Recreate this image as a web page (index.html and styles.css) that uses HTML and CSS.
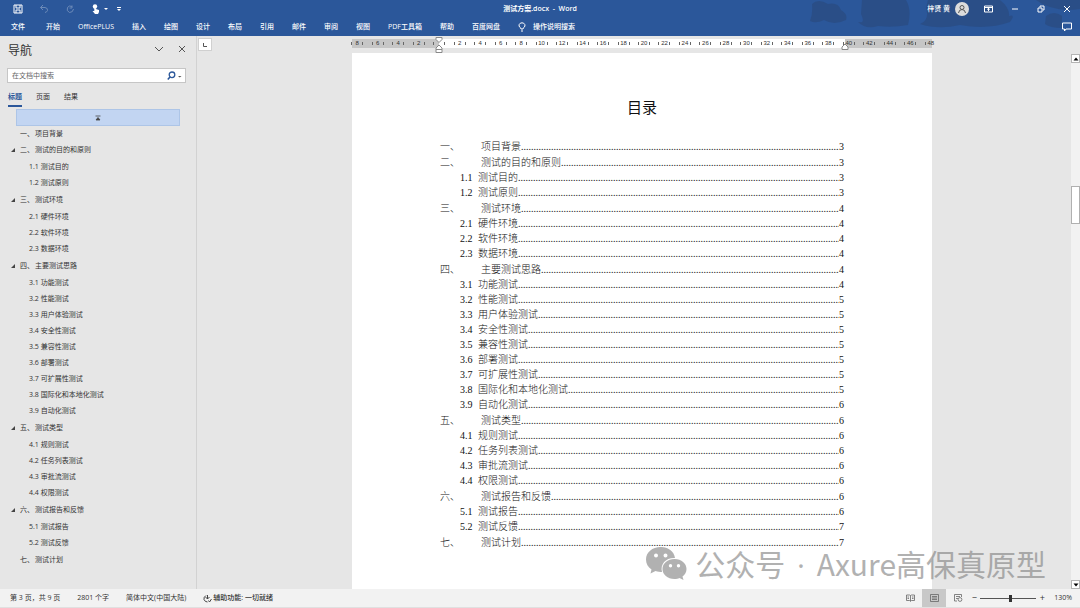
FILE: index.html
```html
<!DOCTYPE html>
<html lang="zh-CN">
<head>
<meta charset="utf-8">
<title>测试方案.docx - Word</title>
<link rel="stylesheet" href="styles.css">
</head>
<body>
<div class="app">
  <header class="header">
    <svg class="header-art" viewBox="0 0 270 36" aria-hidden="true">
      <path d="M2 4Q8-2 18 4Q28 2 31 10Q38 14 36 20Q24 26 14 20Q6 24 0 21Q3 14 2 4Z"/>
      <path d="M52 0H96Q102 10 98 25Q82 28 68 26Q56 30 48 22Q56 24 51 14Z"/>
      <path d="M118 0H190Q200 8 199 16Q206 14 200 22Q178 30 150 25Q128 30 110 24Q120 20 116 8Z"/>
      <path d="M236 16Q244 10 252 16V28Q240 28 235 24Z"/>
      <path d="M226 0H270V9Q244 13 226 0Z"/>
    </svg>
    <div class="titlebar">
      <div class="quick">
        <button class="icon-btn" aria-label="保存"><svg width="10" height="10" viewBox="0 0 10 10"><path class="ln" d="M1 1H9V9H1ZM3 1V4H7V1M3 9V6H7V9"/></svg></button>
        <button class="icon-btn faded" aria-label="撤消"><svg width="10" height="10" viewBox="0 0 10 10"><path class="ln" d="M4 1L1.500 3.500L4 6M1.500 3.500H6Q9 4 8.500 6.500Q8 8 6 8.500"/></svg></button>
        <button class="icon-btn faded" aria-label="恢复"><svg width="10" height="10" viewBox="0 0 10 10"><path class="ln" d="M7 1.500V4H4.500M7 2.500Q4 1 2.500 3.500Q1 7 4.500 8.500Q8 8.500 8.500 5"/></svg></button>
        <span class="touch">
          <button class="icon-btn" aria-label="触摸模式"><svg width="10" height="10" viewBox="0 0 10 10"><circle class="fl" cx="4" cy="2.500" r="2.200"/><path class="fl" d="M3.300 2H4.800V5L8 6V8L7 10H4L1.500 7H3.300Z"/></svg></button>
          <svg width="4" height="4" viewBox="0 0 4 4"><path class="fl" d="M0 1H4L2 3Z"/></svg>
        </span>
        <button class="icon-btn more" aria-label="自定义"><svg width="4" height="6" viewBox="0 0 4 6"><path class="fl" d="M0 1H4V2H0ZM0 3H4L2 5Z"/></svg></button>
      </div>
      <h1 class="doc-title">测试方案.docx&nbsp; -&nbsp; Word</h1>
      <div class="window">
        <span class="user">梓贤 黄</span>
        <svg class="avatar" width="14" height="14" viewBox="0 0 14 14"><circle cx="7" cy="7" r="7" fill="#dcdcdc"/><circle cx="7" cy="5.500" r="2" fill="none" stroke="#555"/><path d="M3.500 11Q4 7.500 7 7.500Q10 7.500 10.500 11" fill="none" stroke="#555"/></svg>
        <button class="icon-btn" aria-label="功能区显示选项"><svg width="9" height="8" viewBox="0 0 9 8"><path class="ln" d="M.5 1H8.500V7H.5ZM.5 2.500H8.500M4.500 6V3M3.200 4.500L4.500 3.300L5.800 4.500"/></svg></button>
        <button class="icon-btn" aria-label="最小化"><svg width="8" height="8" viewBox="0 0 8 8"><path class="ln" d="M1 4H7"/></svg></button>
        <button class="icon-btn" aria-label="还原"><svg width="8" height="8" viewBox="0 0 8 8"><path class="ln" d="M1 3H5V7H1ZM3 2.500V1H7V5H5.500"/></svg></button>
        <button class="icon-btn" aria-label="关闭"><svg width="8" height="8" viewBox="0 0 8 8"><path class="ln" d="M1 1L7 7M7 1L1 7"/></svg></button>
      </div>
    </div>
    <nav class="menu">
      <button class="file">文件</button><button>开始</button><button>OfficePLUS</button><button>插入</button><button>绘图</button><button>设计</button><button>布局</button><button>引用</button><button>邮件</button><button>审阅</button><button>视图</button><button>PDF工具箱</button><button>帮助</button><button>百度网盘</button>
      <button class="tell"><svg width="8" height="10" viewBox="0 0 8 10"><path class="ln" d="M3 7Q3 6 2 5.500Q.5 4 1.200 2.500Q2 .8 4 .8Q6 .8 6.800 2.500Q7.500 4 6 5.500Q5 6 5 7ZM3 9H5"/></svg>操作说明搜索</button>
      <button class="comment" aria-label="批注"><svg width="10" height="10" viewBox="0 0 10 10"><path class="ln" d="M.5 1H9.500V7H4L2.500 9V7H.5Z"/></svg></button>
    </nav>
  </header>

  <div class="body">
    <aside class="side">
      <div class="side-head">
        <h2>导航</h2>
        <button class="icon-btn" aria-label="选项"><svg width="10" height="8" viewBox="0 0 10 8"><path class="ln" d="M1 2L5 6L9 2"/></svg></button>
        <button class="icon-btn" aria-label="关闭导航"><svg width="8" height="8" viewBox="0 0 8 8"><path class="ln" d="M1 1L7 7M7 1L1 7"/></svg></button>
      </div>
      <label class="search">
        <input type="text" placeholder="在文档中搜索" aria-label="在文档中搜索">
        <svg width="15" height="10" viewBox="0 0 15 10"><circle cx="5" cy="3.800" r="2.800" fill="none" stroke="#2b579a" stroke-width="1.300"/><path d="M3 6L.8 8.500" stroke="#2b579a" stroke-width="1.600"/><path d="M11 5H14.500L12.700 6.500Z" fill="#555"/></svg>
      </label>
      <div class="tabs">
        <button class="on">标题</button><button>页面</button><button>结果</button>
      </div>
      <button class="top-row" aria-label="跳转到开头"><svg width="6" height="6" viewBox="0 0 6 6"><path d="M.5 1H5.500M1 5H5L3 2.500Z" fill="#444" stroke="#444" stroke-width=".8"/></svg></button>
      <ul class="outline">
        <li><a href="#c1"><b>一、</b>项目背景</a></li>
        <li class="open"><a href="#c2"><b>二、</b>测试的目的和原则</a>
          <ul><li><a href="#s11">1.1 测试目的</a></li><li><a href="#s12">1.2 测试原则</a></li></ul></li>
        <li class="open"><a href="#c3"><b>三、</b>测试环境</a>
          <ul><li><a href="#s21">2.1 硬件环境</a></li><li><a href="#s22">2.2 软件环境</a></li><li><a href="#s23">2.3 数据环境</a></li></ul></li>
        <li class="open"><a href="#c4"><b>四、</b>主要测试思路</a>
          <ul><li><a href="#s31">3.1 功能测试</a></li><li><a href="#s32">3.2 性能测试</a></li><li><a href="#s33">3.3 用户体验测试</a></li><li><a href="#s34">3.4 安全性测试</a></li><li><a href="#s35">3.5 兼容性测试</a></li><li><a href="#s36">3.6 部署测试</a></li><li><a href="#s37">3.7 可扩展性测试</a></li><li><a href="#s38">3.8 国际化和本地化测试</a></li><li><a href="#s39">3.9 自动化测试</a></li></ul></li>
        <li class="open"><a href="#c5"><b>五、</b>测试类型</a>
          <ul><li><a href="#s41">4.1 规则测试</a></li><li><a href="#s42">4.2 任务列表测试</a></li><li><a href="#s43">4.3 审批流测试</a></li><li><a href="#s44">4.4 权限测试</a></li></ul></li>
        <li class="open"><a href="#c6"><b>六、</b>测试报告和反馈</a>
          <ul><li><a href="#s51">5.1 测试报告</a></li><li><a href="#s52">5.2 测试反馈</a></li></ul></li>
        <li><a href="#c7"><b>七、</b>测试计划</a></li>
      </ul>
    </aside>

    <main class="work">
      <button class="tab-stop" aria-label="制表符"><svg width="4" height="4" viewBox="0 0 4 4"><path d="M.5 0V3.500H4" fill="none" stroke="#555"/></svg></button>
      <div class="canvas">
        <div class="ruler-wrap">
          <div class="ruler"><div class="marks"><i>8</i><i>6</i><i>4</i><i>2</i><i></i><i>2</i><i>4</i><i>6</i><i>8</i><i>10</i><i>12</i><i>14</i><i>16</i><i>18</i><i>20</i><i>22</i><i>24</i><i>26</i><i>28</i><i>30</i><i>32</i><i>34</i><i>36</i><i>38</i><i>40</i><i>42</i><i>44</i><i>46</i><i class="end">48</i></div></div>
          <svg class="indent left" width="8" height="16" viewBox="0 0 8 16"><path d="M1 .5H7V2.500L4 5.500L1 2.500ZM4 8L7 11V12.500H1V11ZM1 12.500H7V15.500H1Z"/></svg>
          <svg class="indent right" width="8" height="16" viewBox="0 0 8 16"><path d="M4 7L7 10V12.500H1V10Z"/></svg>
        </div>
        <article class="page">
          <h2>目录</h2>
          <div class="toc">
            <section><a class="ch" href="#c1"><b>一、</b>项目背景<s></s>3</a></section>
            <section><a class="ch" href="#c2"><b>二、</b>测试的目的和原则<s></s>3</a>
              <a href="#s11"><b>1.1</b>测试目的<s></s>3</a><a href="#s12"><b>1.2</b>测试原则<s></s>3</a></section>
            <section><a class="ch" href="#c3"><b>三、</b>测试环境<s></s>4</a>
              <a href="#s21"><b>2.1</b>硬件环境<s></s>4</a><a href="#s22"><b>2.2</b>软件环境<s></s>4</a><a href="#s23"><b>2.3</b>数据环境<s></s>4</a></section>
            <section><a class="ch" href="#c4"><b>四、</b>主要测试思路<s></s>4</a>
              <a href="#s31"><b>3.1</b>功能测试<s></s>4</a><a href="#s32"><b>3.2</b>性能测试<s></s>5</a><a href="#s33"><b>3.3</b>用户体验测试<s></s>5</a><a href="#s34"><b>3.4</b>安全性测试<s></s>5</a><a href="#s35"><b>3.5</b>兼容性测试<s></s>5</a><a href="#s36"><b>3.6</b>部署测试<s></s>5</a><a href="#s37"><b>3.7</b>可扩展性测试<s></s>5</a><a href="#s38"><b>3.8</b>国际化和本地化测试<s></s>5</a><a href="#s39"><b>3.9</b>自动化测试<s></s>6</a></section>
            <section><a class="ch" href="#c5"><b>五、</b>测试类型<s></s>6</a>
              <a href="#s41"><b>4.1</b>规则测试<s></s>6</a><a href="#s42"><b>4.2</b>任务列表测试<s></s>6</a><a href="#s43"><b>4.3</b>审批流测试<s></s>6</a><a href="#s44"><b>4.4</b>权限测试<s></s>6</a></section>
            <section><a class="ch" href="#c6"><b>六、</b>测试报告和反馈<s></s>6</a>
              <a href="#s51"><b>5.1</b>测试报告<s></s>6</a><a href="#s52"><b>5.2</b>测试反馈<s></s>7</a></section>
            <section><a class="ch" href="#c7"><b>七、</b>测试计划<s></s>7</a></section>
          </div>
        </article>
      </div>
      <div class="scroll">
        <button aria-label="向上滚动"><svg width="6" height="4" viewBox="0 0 6 4"><path d="M.5 3.500H5.500L3 .5Z"/></svg></button>
        <div class="track"><div class="thumb"></div></div>
        <button aria-label="向下滚动"><svg width="6" height="4" viewBox="0 0 6 4"><path d="M.5 .5H5.500L3 3.500Z"/></svg></button>
      </div>
      <div class="watermark">
        <svg width="41" height="34" viewBox="0 0 41 34"><path fill-rule="evenodd" d="M15 0C6 0 0 5.500 0 12.500C0 17 2 20 5.500 22.500L4.500 26.500L9.500 24C12 24.800 14 25 16 25C14 17 20 10.500 29 11C28 4 22 0 15 0ZM10 6.500a2 2 0 1 1 0 4a2 2 0 1 1 0-4ZM19.500 6.500a2 2 0 1 1 0 4a2 2 0 1 1 0-4Z"/><path fill-rule="evenodd" d="M28.500 12C21.500 12 16.500 16.500 16.500 22C16.500 27.500 21.500 32 28.500 32C30.500 32 32 31.600 33.500 31L37.500 33L36.500 29.500C39 27.500 40.500 25 40.500 22C40.500 16.500 35.500 12 28.500 12ZM24.500 17a1.700 1.700 0 1 1 0 3.400a1.700 1.700 0 1 1 0-3.400ZM32.500 17a1.700 1.700 0 1 1 0 3.400a1.700 1.700 0 1 1 0-3.400Z"/></svg>
        <span>公众号<span class="dot"> · </span>Axure高保真原型</span>
      </div>
    </main>
  </div>

  <footer class="status">
    <span>第 3 页，共 9 页</span><span>2801 个字</span><span>简体中文(中国大陆)</span>
    <span class="access"><svg width="9" height="9" viewBox="0 0 9 9"><path d="M3 1.500Q.5 3 1 5.500Q2 8 4.500 8M4.500 1V5M2.500 3L4.500 5L6.500 3M5.500 6.500L6.500 8L8.500 5" fill="none" stroke="#444"/></svg>辅助功能: 一切就绪</span>
    <div class="views">
      <button aria-label="阅读视图"><svg width="9" height="8" viewBox="0 0 9 8"><path d="M4.500 1.500V7.500M.5 1H3.500L4.500 1.500L5.500 1H8.500V6.500H5.500L4.500 7L3.500 6.500H.5ZM1.500 3H3M1.500 4.500H3M6 3H7.500M6 4.500H7.500"/></svg></button>
      <button class="on" aria-label="页面视图"><svg width="9" height="8" viewBox="0 0 9 8"><path d="M.5 .5H8.500V7.500H.5ZM2 2.500H7M2 4H7M2 5.500H7"/></svg></button>
      <button aria-label="Web 版式视图"><svg width="9" height="8" viewBox="0 0 9 8"><path d="M7.500 3V.5H.5V7H3M2 2.500H6M2 4.500H4"/><circle cx="6" cy="5.500" r="1.900"/></svg></button>
    </div>
    <button class="zoom-btn" aria-label="缩小">−</button>
    <input class="zoom" type="range" min="0" max="100" value="54" aria-label="缩放">
    <button class="zoom-btn" aria-label="放大">+</button>
    <span class="pct">130%</span>
  </footer>
</div>
</body>
</html>
```
FILE: styles.css
```css
* { box-sizing: border-box; }
body { margin: 0; font: 7px/16px "Open Sans", "Noto Sans CJK SC", sans-serif; color: #333; }
button { border: 0; padding: 0; background: none; font: inherit; color: inherit; display: flex; align-items: center; justify-content: center; white-space: nowrap; }
h1, h2 { margin: 0; font-weight: 400; }
a { color: inherit; text-decoration: none; white-space: nowrap; }
ul { list-style: none; margin: 0; padding: 0; }
svg { display: block; flex: none; }
.ln { fill: none; stroke: currentColor; stroke-width: 1; }
.fl { fill: currentColor; }

.app { min-height: 100vh; display: flex; flex-direction: column; background: #e6e6e6; overflow: hidden; }

.header { position: relative; background: #2b579a; color: #fff; }
.header-art { position: absolute; top: 0; right: 0; width: 270px; height: 36px; fill: #2a4b80; opacity: .7; }
.titlebar { position: relative; display: grid; grid-template-columns: 1fr auto 1fr; align-items: center; height: 18px; }
.quick { display: flex; align-items: center; gap: 16px; padding-left: 13px; }
.touch { display: flex; align-items: center; gap: 3px; }
.more { margin-left: -7px; }
.faded { opacity: .3; }
.doc-title { font-size: 7px; font-weight: 600; }
.window { display: flex; align-items: center; justify-content: flex-end; gap: 18px; padding-right: 9px; }
.user { font-weight: 500; }
.avatar { margin: 0 -3px 0 -13px; }
.menu { position: relative; display: flex; gap: 18px; height: 18px; padding: 0 8px 0 11px; font-weight: 500; }
.file { margin-right: 3px; }
.tell { gap: 7px; }
.comment { margin-left: auto; }

.body { flex: 1; display: flex; }
.side { flex: none; width: 197px; border-right: 1px solid #d2d2d2; padding: 6px 10px 0 7px; }
.side-head { display: flex; align-items: center; gap: 14px; height: 17px; padding: 0 0 0 1px; color: #555; }
.side-head h2 { font-size: 12px; color: #333; margin-right: auto; }
.side-head button { margin-bottom: 3px; }
.search { display: flex; align-items: center; height: 15px; margin-top: 9px; background: #fff; border: 1px solid #c6c6c6; padding: 0 3px 0 4px; }
.search input { flex: 1; min-width: 0; border: 0; outline: 0; padding: 0; background: none; font: inherit; line-height: 12px; }
.search input::placeholder { color: #666; opacity: 1; }
.tabs { display: flex; gap: 14px; margin-top: 6px; padding-left: 1px; }
.tabs button { height: 18px; border-bottom: 2px solid transparent; }
.tabs .on { color: #2b579a; border-color: #2b579a; font-weight: 600; }
.top-row { height: 17px; width: 164px; margin: 2px 0 0 9px; background: #c2d5f2; border: 1px solid #adc5e7; }
.outline { padding-left: 13px; }
.outline a { display: block; height: 16px; }
.outline b { display: inline-block; width: 15px; font-weight: 400; }
.outline ul { margin: 1px 0; padding-left: 9px; }
.open { position: relative; }
.open::before { content: ""; position: absolute; left: -9px; top: 6px; width: 4px; height: 4px; background: #444; clip-path: polygon(100% 0, 100% 100%, 0 100%); }

.work { position: relative; flex: 1; display: flex; }
.tab-stop { position: absolute; left: 1px; top: 2px; width: 14px; height: 13px; background: #fff; border: 1px solid #d0d0d0; }
.canvas { flex: 1; display: flex; flex-direction: column; align-items: center; padding: 3px 0 0 16px; }
.ruler-wrap { position: relative; width: 580px; margin-bottom: 5px; }
.ruler { background: linear-gradient(90deg, #c6c6c6 15%, #fff 15% 85%, #c6c6c6 85%); }
.marks { display: grid; grid-template-columns: repeat(29, 1fr); margin: 0 -9px 0 -5px; height: 9px; align-items: center; }
.marks i { position: relative; justify-self: center; width: 12px; height: 9px; font: 6px/9px "Liberation Sans", sans-serif; text-align: center; }
.marks i::before { content: ""; position: absolute; inset: 3px 0; border: solid #666; border-width: 0 1px; }
.marks .end::before { border-right: 0; }
.indent { position: absolute; top: -2px; fill: #fff; stroke: #888; }
.left { left: 83px; }
.right { right: 83px; }
.page { flex: 1; width: 580px; background: #fff; padding: 44px 88px 38px; font-family: "Liberation Serif", "Noto Sans CJK SC", serif; color: #111; }
.page h2 { font-size: 15px; line-height: 22px; text-align: center; margin-bottom: 20px; }
.toc { display: flex; flex-direction: column; gap: 1px; font-size: 10px; line-height: 15px; font-weight: 300; }
.toc a { display: flex; height: 15px; padding-left: 20px; }
.toc b { width: 18px; flex: none; font-weight: 400; }
.toc .ch { padding-left: 0; }
.toc .ch b { width: 41px; font-weight: 300; }
.toc s { flex: 1; width: 0; overflow: hidden; text-decoration: none; }
.toc s::before { content: "........................................................................................................................................................................"; }

.scroll { flex: none; width: 9px; margin-top: 18px; display: flex; flex-direction: column; background: #f2f2f2; }
.scroll button { width: 9px; height: 9px; background: #fff; border: 1px solid #b4b4b4; }
.track { flex: 1; display: flex; flex-direction: column; padding-top: 123px; }
.thumb { height: 38px; background: #fff; border: 1px solid #b0b0b0; }
.watermark { position: absolute; right: 34px; bottom: 7px; display: flex; align-items: center; gap: 8px; color: #888; opacity: .65; font: 30px/34px "Noto Sans CJK SC", sans-serif; white-space: nowrap; }
.watermark svg { fill: currentColor; }
.dot { font-family: "Open Sans", sans-serif; padding: 0 4px; }

.status { display: flex; align-items: center; gap: 17px; height: 19px; background: #f2f2f2; border-bottom: 1px solid #e0e0e0; padding: 0 8px 0 10px; white-space: nowrap; }
.access { display: flex; align-items: center; gap: 1px; font-weight: 500; }
.views { display: flex; align-self: stretch; margin: 0 -2px 0 auto; }
.views button { width: 24px; }
.views .on { background: #c8c8c8; }
.views svg { fill: none; stroke: #666; stroke-width: .8; }
.zoom-btn { width: 6px; font-size: 9px; margin: 0 -14px; }
.zoom { appearance: none; width: 56px; height: 9px; margin: 0; background: linear-gradient(#555, #555) center / 100% 1px no-repeat; }
.zoom::-webkit-slider-thumb { appearance: none; width: 3px; height: 7px; background: #333; }
.pct { margin-left: 6px; }
```
